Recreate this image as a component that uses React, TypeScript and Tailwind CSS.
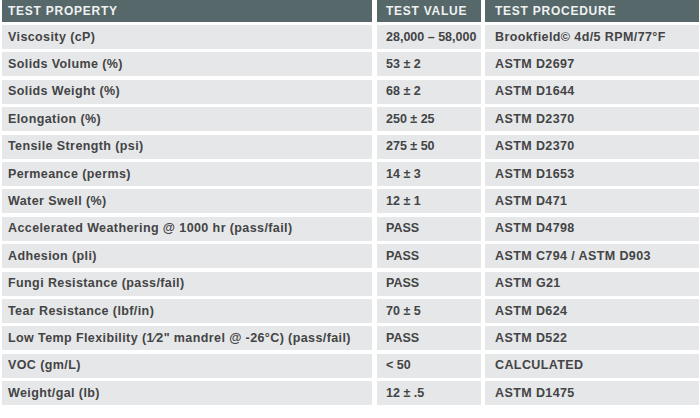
import React from "react";

const rows: [string, string, string][] = [
  ["Viscosity (cP)", "28,000 – 58,000", "Brookfield© 4d/5 RPM/77°F"],
  ["Solids Volume (%)", "53 ± 2", "ASTM D2697"],
  ["Solids Weight (%)", "68 ± 2", "ASTM D1644"],
  ["Elongation (%)", "250 ± 25", "ASTM D2370"],
  ["Tensile Strength (psi)", "275 ± 50", "ASTM D2370"],
  ["Permeance (perms)", "14 ± 3", "ASTM D1653"],
  ["Water Swell (%)", "12 ± 1", "ASTM D471"],
  ["Accelerated Weathering @ 1000 hr (pass/fail)", "PASS", "ASTM D4798"],
  ["Adhesion (pli)", "PASS", "ASTM C794 / ASTM D903"],
  ["Fungi Resistance (pass/fail)", "PASS", "ASTM G21"],
  ["Tear Resistance (lbf/in)", "70 ± 5", "ASTM D624"],
  ["Low Temp Flexibility (1⁄2\" mandrel @ -26°C) (pass/fail)", "PASS", "ASTM D522"],
  ["VOC (gm/L)", "< 50", "CALCULATED"],
  ["Weight/gal (lb)", "12 ± .5", "ASTM D1475"],
];

export default function App() {
  return (
    <div
      className="w-[700px] h-[418px] bg-white overflow-hidden"
      style={{ fontFamily: '"Liberation Sans", Arial, sans-serif' }}
    >
      <div className="grid grid-cols-[370px_105px_214px] gap-x-[4px] pl-[2px] text-[12px] font-bold">
        <div className="h-[22px] bg-[#57686a] text-[#eef1f1] flex items-center pl-[6px] tracking-[0.75px]">TEST PROPERTY</div>
        <div className="h-[22px] bg-[#57686a] text-[#eef1f1] flex items-center pl-[9px] tracking-[0.75px] ml-[1px]">TEST VALUE</div>
        <div className="h-[22px] bg-[#57686a] text-[#eef1f1] flex items-center pl-[10px] tracking-[0.75px]">TEST PROCEDURE</div>
      </div>
      <div className="mt-[3px] flex flex-col gap-[3.4px] pl-[2px]">
        {rows.map((r, i) => (
          <div key={i} className="grid grid-cols-[370px_105px_214px] gap-x-[4px] text-[12.5px] font-bold text-[#434445]">
            <div className="h-[24px] bg-[#e6e7e8] flex items-center pl-[6px] tracking-[0.4px] whitespace-nowrap">{r[0]}</div>
            <div className="h-[24px] bg-[#e6e7e8] flex items-center pl-[9px] ml-[1px] tracking-[0px] whitespace-nowrap">{r[1]}</div>
            <div className="h-[24px] bg-[#e6e7e8] flex items-center pl-[10px] tracking-[0.4px] whitespace-nowrap">{r[2]}</div>
          </div>
        ))}
      </div>
    </div>
  );
}
